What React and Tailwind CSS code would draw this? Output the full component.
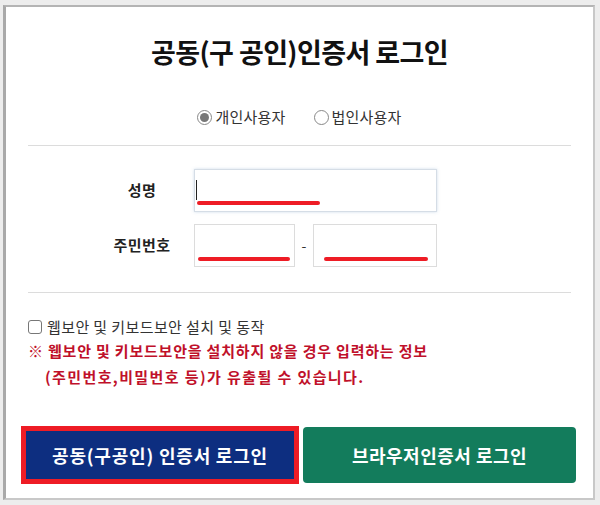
import React from 'react';

const font = { fontFamily: '"Noto Sans CJK KR", "Noto Sans", sans-serif' };

const RedMark = ({ className }) => (
    <div className={`absolute h-[4px] rounded-full bg-[#ee1c25] ${className}`} />
);

const App = () => {
    const [userType, setUserType] = React.useState('personal');
    const [agree, setAgree] = React.useState(false);

    return (
        <div className="w-[600px] h-[505px] bg-[#ededed] pt-[5px] pl-[3px] pr-[5px] pb-[5px]" style={font}>
            <div className="h-[495px] bg-white border-l-[3px] border-t-[2px] border-r-[2px] border-b-[2px] border-l-[#a9a9a9] border-t-[#b4b4b4] border-r-[#c8c8c8] border-b-[#c8c8c8] flex flex-col">
                <h1 className="mt-[28px] text-center text-[27px] leading-[34px] font-bold text-[#111] tracking-[-0.6px]">
                    공동(구 공인)인증서 로그인
                </h1>

                <div className="mt-[38px] flex justify-center items-center gap-[28px] text-[15px] leading-[20px] text-[#333] tracking-[0.2px]">
                    <label className="flex items-center gap-[3px] cursor-pointer" onClick={() => setUserType('personal')}>
                        <span className="w-[15px] h-[15px] rounded-full border border-[#888] flex items-center justify-center bg-white">
                            {userType === 'personal' && <span className="w-[9px] h-[9px] rounded-full bg-[#777]" />}
                        </span>
                        개인사용자
                    </label>
                    <label className="flex items-center gap-[3px] cursor-pointer" onClick={() => setUserType('corp')}>
                        <span className="w-[15px] h-[15px] rounded-full border border-[#888] flex items-center justify-center bg-white">
                            {userType === 'corp' && <span className="w-[9px] h-[9px] rounded-full bg-[#777]" />}
                        </span>
                        법인사용자
                    </label>
                </div>

                <div className="mt-[18px] mx-[22px] border-t border-[#dcdcdc]" />

                <div className="mt-[23px] flex items-center">
                    <div className="w-[188px] pl-[84px] text-center text-[15px] font-bold text-[#222] tracking-[0.5px]">성명</div>
                    <div className="relative w-[243px] h-[43px] border border-[#d5dde6] shadow-[0_0_3px_rgba(120,160,200,0.35)] bg-white">
                        <div className="absolute left-[1px] top-[10px] w-[1px] h-[20px] bg-[#222]" />
                        <RedMark className="left-[2px] right-[116px] top-[31px]" />
                    </div>
                </div>

                <div className="mt-[12px] flex items-center">
                    <div className="w-[188px] pl-[84px] text-center text-[15px] font-bold text-[#222] tracking-[0.5px]">주민번호</div>
                    <div className="relative w-[101px] h-[43px] border border-[#dcdcdc] bg-white">
                        <RedMark className="left-[3px] right-[4px] top-[32px]" />
                    </div>
                    <div className="w-[18px] text-center text-[14px] text-[#333]">-</div>
                    <div className="relative w-[124px] h-[43px] border border-[#dcdcdc] bg-white">
                        <RedMark className="left-[10px] right-[8px] top-[32px]" />
                    </div>
                </div>

                <div className="mt-[25px] mx-[22px] border-t border-[#dcdcdc]" />

                <div className="mt-[24px] pl-[22px]">
                    <label className="flex items-center gap-[5px] text-[15px] leading-[20px] text-[#333] tracking-[0.4px] cursor-pointer" onClick={() => setAgree(!agree)}>
                        <span className={`w-[14px] h-[14px] rounded-[3px] border border-[#777] ${agree ? 'bg-[#777]' : 'bg-white'}`} />
                        웹보안 및 키보드보안 설치 및 동작
                    </label>
                    <p className="mt-[1px] text-[15px] leading-[26px] font-bold text-[#c0102a] tracking-[0.8px]">
                        ※ 웹보안 및 키보드보안을 설치하지 않을 경우 입력하는 정보
                    </p>
                    <p className="pl-[17px] text-[15px] leading-[26px] font-bold text-[#c0102a] tracking-[1.4px]">
                        (주민번호,비밀번호 등)가 유출될 수 있습니다.
                    </p>
                </div>

                <div className="mt-[36px] pl-[15px] flex items-center gap-[4px]">
                    <div className="w-[278px] h-[58px] border-[5px] border-[#ee1c25] bg-[#0d2e80] flex items-center justify-center">
                        <button className="text-white text-[18px] font-bold tracking-[0.8px]">공동(구공인) 인증서 로그인</button>
                    </div>
                    <button className="w-[273px] h-[56px] rounded-[4px] bg-[#137c5c] text-white text-[18px] font-bold tracking-[0.5px]">
                        브라우저인증서 로그인
                    </button>
                </div>
            </div>
        </div>
    );
};

export default App;
